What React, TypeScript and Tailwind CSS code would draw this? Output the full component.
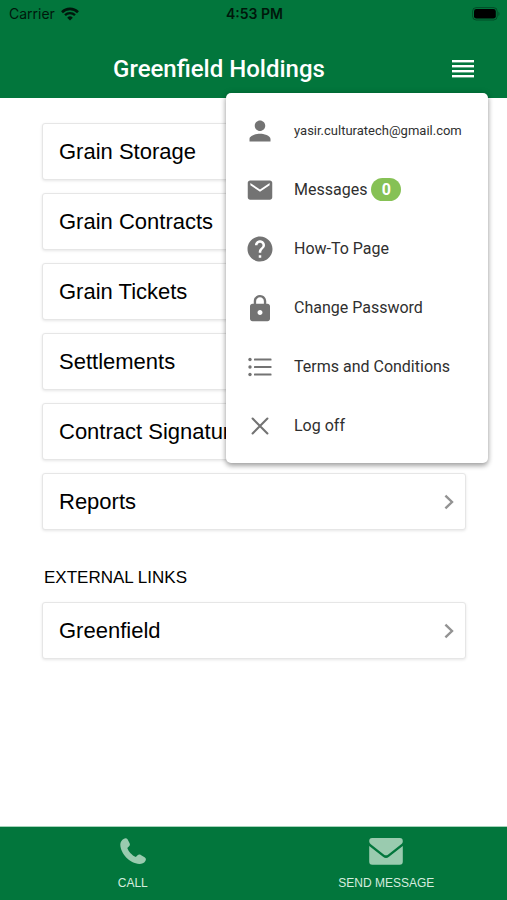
import type { ReactNode } from "react";
import { IoMdLock, IoMdMail, IoMdPerson } from "react-icons/io";
import { MdHelp } from "react-icons/md";

const pages = [
  "Grain Storage",
  "Grain Contracts",
  "Grain Tickets",
  "Settlements",
  "Contract Signatures",
  "Reports",
];

function WifiIcon() {
  return (
    <svg className="w-[18px] h-[14px]" viewBox="0 0 18 14" fill="none">
      <path d="M1 5.2a11.4 11.4 0 0 1 16 0" stroke="#000" strokeWidth="2.6" />
      <path d="M4 8.2a7.2 7.2 0 0 1 10 0" stroke="#000" strokeWidth="2.3" />
      <path d="M9 13.6 6.2 10.7a4 4 0 0 1 5.6 0Z" fill="#000" />
    </svg>
  );
}

function BatteryIcon() {
  return (
    <svg className="w-[28px] h-[14px]" viewBox="0 0 28 14" fill="none">
      <rect
        x="0.6"
        y="0.6"
        width="24.6"
        height="12.4"
        rx="3.6"
        stroke="#000"
        strokeOpacity="0.35"
      />
      <rect x="2" y="2" width="21.8" height="9.6" rx="2.4" fill="#000" />
      <path d="M26.5 4.8v4.2c1.2-.6 1.2-3.6 0-4.2Z" fill="#000" fillOpacity="0.4" />
    </svg>
  );
}

function MenuBarsIcon() {
  return (
    <svg className="w-[22px] h-[18px]" viewBox="0 0 22 18" fill="#fff">
      <rect y="0" width="22" height="2.4" />
      <rect y="5" width="22" height="2.4" />
      <rect y="10" width="22" height="2.4" />
      <rect y="15" width="22" height="2.4" />
    </svg>
  );
}

function ListIcon() {
  return (
    <svg className="w-[24px] h-[20px]" viewBox="0 0 24 20" fill="#737373">
      <circle cx="2" cy="2.5" r="1.7" />
      <circle cx="2" cy="10" r="1.7" />
      <circle cx="2" cy="17.5" r="1.7" />
      <rect x="6" y="1.4" width="17.5" height="2.2" rx="0.6" />
      <rect x="6" y="8.9" width="17.5" height="2.2" rx="0.6" />
      <rect x="6" y="16.4" width="17.5" height="2.2" rx="0.6" />
    </svg>
  );
}

function CloseIcon() {
  return (
    <svg className="w-[18px] h-[18px]" viewBox="0 0 18 18" fill="none">
      <path
        d="m1.6 1.6 14.8 14.8m0-14.8L1.6 16.4"
        stroke="#737373"
        strokeWidth="2.1"
        strokeLinecap="round"
      />
    </svg>
  );
}

function PhoneIcon() {
  return (
    <svg className="w-[26px] h-[26px]" viewBox="0 0 26 26" fill="#9acbaf">
      <path d="M4 .8C5.5-.2 7 .3 7.8 1.7l1.8 3.6c.7 1.5.2 2.5-1 3.5L7.3 10c1.2 3.6 4.7 7.4 8.5 8.9l1.5-1.3c1-.9 2.1-1.4 3.5-.6l3.8 2.2c1.4.8 1.7 2.4.8 3.8-1.4 2.2-3.4 3-5.9 3C9.5 25.6.6 15.5.3 6.8.2 4.2 1.6 2.2 4 .8Z" />
    </svg>
  );
}

function EnvelopeIcon() {
  return (
    <svg className="w-[34px] h-[27px]" viewBox="0 0 34 27" fill="#9acbaf">
      <path d="M3.5 0h27a3.2 3.2 0 0 1 3.3 3.2c0 1.3-.6 2.3-1.6 3.1L19.2 16.5a3.6 3.6 0 0 1-4.4 0L1.8 6.3A4 4 0 0 1 .2 3.2 3.2 3.2 0 0 1 3.5 0Z" />
      <path d="M.2 8 14 18.8a4.8 4.8 0 0 0 6 0L33.8 8v15.6a3.2 3.2 0 0 1-3.3 3.2h-27a3.2 3.2 0 0 1-3.3-3.2Z" />
    </svg>
  );
}

function Chevron() {
  return (
    <svg className="w-[10px] h-[16px]" viewBox="0 0 10 16" fill="none">
      <path d="m1.4 1.6 6.6 6.4-6.6 6.4" stroke="#939393" strokeWidth="2.4" />
    </svg>
  );
}

function Card(props: { title: string }) {
  return (
    <a
      href="#"
      className="flex items-center h-[57px] pl-4 pr-[11px] rounded-[3px] border border-[#e6e6e6] bg-white shadow-[0_1px_3px_rgba(0,0,0,0.1)]"
    >
      <span className="flex-grow text-[22px]">{props.title}</span>
      <Chevron />
    </a>
  );
}

function MenuItem(props: { icon: ReactNode; small?: boolean; children: ReactNode }) {
  return (
    <li>
      <button className="flex items-center w-full h-[59px] pl-5 text-left text-[#2f2f2f]">
        <span className="flex justify-center w-7 mr-5 text-[#737373]">
          {props.icon}
        </span>
        <span
          className={
            props.small
              ? "text-[13px] whitespace-nowrap"
              : "flex items-center gap-1 text-[16px] whitespace-nowrap"
          }
        >
          {props.children}
        </span>
      </button>
    </li>
  );
}

function AccountMenu() {
  return (
    <ul className="absolute right-[19px] top-[93px] w-[262px] py-2 rounded-[5px] bg-white font-[Roboto,sans-serif] shadow-[0_3px_5px_rgba(0,0,0,0.3),0_0_6px_rgba(0,0,0,0.16)]">
      <MenuItem icon={<IoMdPerson size={28} />} small>
        yasir.culturatech@gmail.com
      </MenuItem>
      <MenuItem icon={<IoMdMail size={28} />}>
        Messages
        <span className="w-[30px] rounded-full bg-[#86c155] text-center font-bold text-white leading-[23px]">
          0
        </span>
      </MenuItem>
      <MenuItem icon={<MdHelp className="shrink-0" size={30} />}>
        How-To Page
      </MenuItem>
      <MenuItem icon={<IoMdLock className="shrink-0" size={32} />}>
        Change Password
      </MenuItem>
      <MenuItem icon={<ListIcon />}>Terms and Conditions</MenuItem>
      <MenuItem icon={<CloseIcon />}>Log off</MenuItem>
    </ul>
  );
}

export default function App() {
  return (
    <div className="relative flex flex-col min-h-screen bg-white text-black font-['Liberation_Sans',Arial,sans-serif]">
      <header className="bg-[#02763c]">
        <div className="grid grid-cols-3 items-center h-[27px] pl-[9px] pr-[7px] font-[Inter,sans-serif] text-[14px]">
          <div className="flex items-center gap-1.5 opacity-80">
            Carrier
            <WifiIcon />
          </div>
          <p className="text-center font-semibold opacity-80">4:53 PM</p>
          <div className="flex justify-end">
            <BatteryIcon />
          </div>
        </div>
        <div className="grid grid-cols-[1fr_auto_1fr] items-center h-[71px] pt-3 px-[33px]">
          <h1 className="col-start-2 -ml-[69px] font-[Roboto,sans-serif] font-medium text-[24px] text-white">
            Greenfield Holdings
          </h1>
          <button className="justify-self-end" aria-label="Menu">
            <MenuBarsIcon />
          </button>
        </div>
      </header>
      <main className="flex-grow pt-[25px] pl-[42px] pr-[41px]">
        <nav className="flex flex-col gap-[13px]">
          {pages.map((title) => (
            <Card key={title} title={title} />
          ))}
        </nav>
        <h2 className="pt-9 pb-3 pl-0.5 text-[17px] leading-6">
          EXTERNAL LINKS
        </h2>
        <Card title="Greenfield" />
      </main>
      <footer className="grid grid-cols-2 h-[74px] border-t border-[#a5d3ba] bg-[#02763c] text-[12px] text-[#d5ecdf]">
        <button className="flex flex-col items-center pl-3">
          <span className="flex items-center h-12">
            <PhoneIcon />
          </span>
          <span className="leading-4">CALL</span>
        </button>
        <button className="flex flex-col items-center pl-3">
          <span className="flex items-center h-12">
            <EnvelopeIcon />
          </span>
          <span className="leading-4">SEND MESSAGE</span>
        </button>
      </footer>
      <AccountMenu />
    </div>
  );
}
